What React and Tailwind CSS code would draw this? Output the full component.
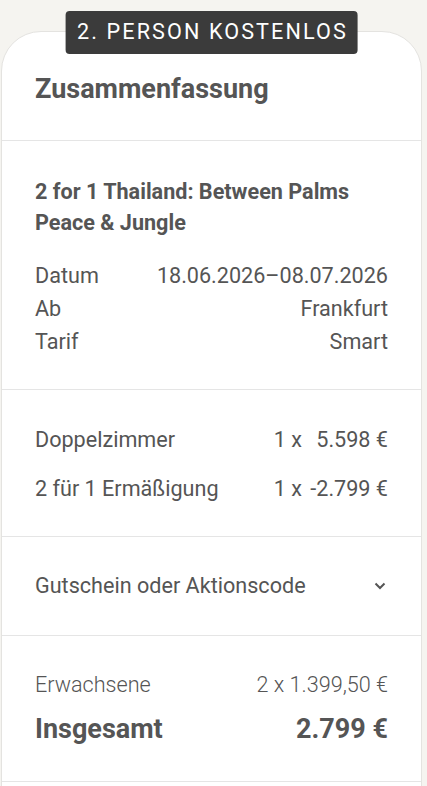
import React from 'react';

const Row = ({ label, value }) => (
  <div className="flex justify-between leading-[33px]">
    <span>{label}</span>
    <span>{value}</span>
  </div>
);

const PriceRow = ({ label, qty, price }) => (
  <div className="flex items-center leading-[30px]">
    <span className="flex-1">{label}</span>
    <span>{qty}</span>
    <span className="w-[86px] text-right">{price}</span>
  </div>
);

export default function App() {
  return (
    <div className="min-h-[786px] bg-[#f5f4f0] font-['Roboto',sans-serif] text-[#555555]">
      <div className="relative ml-[1px] mr-[5px] pt-[31px]">
        {/* Badge */}
        <div className="absolute left-1/2 top-[11px] -translate-x-1/2 rounded-[4px] bg-[#3b3b3b] pl-[12px] pr-[10px] h-[43px] flex items-center text-[21.6px] tracking-[2.1px] text-white whitespace-nowrap">
          2. PERSON KOSTENLOS
        </div>

        <div className="rounded-t-[40px] border border-[#e4e3e0] bg-white">
          {/* Header */}
          <div className="px-[33px] pt-[41px] pb-[35px]">
            <h2 className="text-[27px] font-bold leading-[32px]">Zusammenfassung</h2>
          </div>

          {/* Trip */}
          <div className="border-t border-[#e5e5e5] px-[33px] pt-[35px] pb-[31px] text-[21.6px]">
            <h3 className="font-bold leading-[31px]">
              2 for 1 Thailand: Between Palms
              <br />
              Peace &amp; Jungle
            </h3>
            <div className="mt-[21px]">
              <Row label="Datum" value="18.06.2026–08.07.2026" />
              <Row label="Ab" value="Frankfurt" />
              <Row label="Tarif" value="Smart" />
            </div>
          </div>

          {/* Items */}
          <div className="border-t border-[#e5e5e5] px-[33px] pt-[35px] pb-[32px] text-[21.6px] flex flex-col gap-[19px]">
            <PriceRow label="Doppelzimmer" qty="1 x" price="5.598 €" />
            <PriceRow label="2 für 1 Ermäßigung" qty="1 x" price="-2.799 €" />
          </div>

          {/* Voucher */}
          <div className="border-t border-[#e5e5e5] px-[33px] pt-[34px] pb-[34px] text-[21.6px]">
            <div className="flex items-center justify-between leading-[30px]">
              <span>Gutschein oder Aktionscode</span>
              <svg width="12" height="8" viewBox="0 0 12 8" className="mr-[2px]">
                <path d="M1.5 1.5l4.5 4.5 4.5-4.5" fill="none" stroke="#555555" strokeWidth="2" />
              </svg>
            </div>
          </div>

          {/* Total */}
          <div className="border-t border-[#e5e5e5] border-b px-[33px] pt-[34px] pb-[34px]">
            <div className="flex justify-between text-[21.6px] font-light leading-[30px]">
              <span>Erwachsene</span>
              <span>2 x 1.399,50 €</span>
            </div>
            <div className="mt-[11px] flex justify-between text-[27px] font-bold leading-[36px]">
              <span>Insgesamt</span>
              <span>2.799 €</span>
            </div>
          </div>
          <div className="h-[6px]" />
        </div>
      </div>
    </div>
  );
}
